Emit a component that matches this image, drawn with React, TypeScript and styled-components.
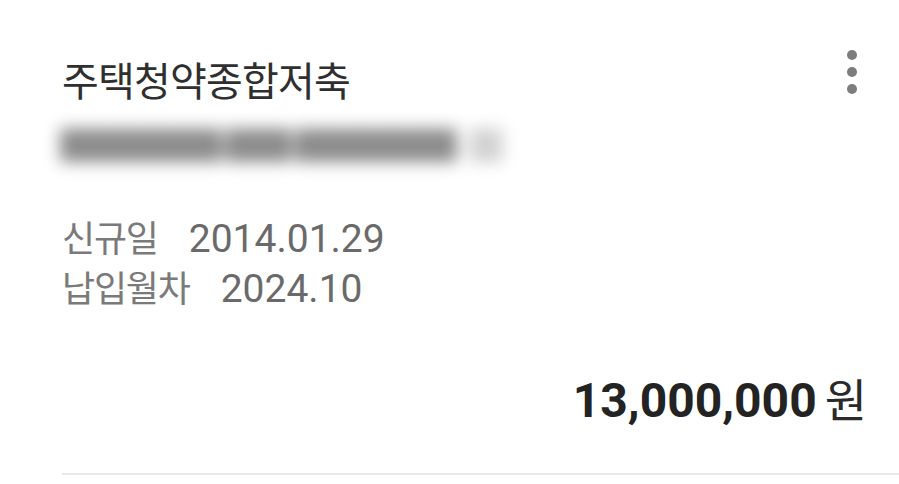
import React from 'react';
import styled, { createGlobalStyle } from 'styled-components';

const GlobalStyle = createGlobalStyle`
  html, body {
    margin: 0;
    padding: 0;
    background: #ffffff;
  }
  body {
    font-family: Roboto, "Noto Sans CJK KR", sans-serif;
  }
`;

const Card = styled.div`
  width: 899px;
  height: 484px;
  box-sizing: border-box;
  padding: 46px 0 0 62px;
  background: #ffffff;
  overflow: hidden;
`;

const Header = styled.div`
  display: flex;
  justify-content: space-between;
  align-items: flex-start;
  padding-right: 42px;
`;

const Title = styled.h1`
  margin: 0;
  font-family: "Noto Sans CJK KR", sans-serif;
  font-weight: 400;
  font-size: 40px;
  line-height: 66px;
  color: #2f2f2f;
  letter-spacing: -0.8px;
`;

const MoreButton = styled.button`
  display: flex;
  flex-direction: column;
  gap: 7px;
  padding: 4px 0 0;
  margin: 0;
  border: none;
  background: transparent;
  cursor: pointer;
`;

const Dot = styled.span`
  width: 10px;
  height: 10px;
  border-radius: 50%;
  background: #7d7d7d;
`;

// account number, blurred out in the source
const Masked = styled.div`
  margin: 0 0 0 -6px;
  height: 60px;
  display: flex;
  align-items: center;
  gap: 14px;
  font-family: "Noto Sans CJK KR", sans-serif;
  font-size: 42px;
  font-weight: 700;
  filter: blur(8px);
  user-select: none;
`;

const MaskedPart = styled.span<{ $faint?: boolean }>`
  color: ${(p) => (p.$faint ? '#d2d2d2' : '#8c8c8c')};
  letter-spacing: -10px;
`;

const InfoList = styled.dl`
  margin: 38px 0 0;
  display: flex;
  flex-direction: column;
  gap: 2px;
`;

const InfoRow = styled.div`
  display: flex;
  align-items: baseline;
  gap: 31px;
  height: 48px;
`;

const Label = styled.dt`
  margin: 0;
  font-family: "Noto Sans CJK KR", sans-serif;
  font-size: 36px;
  color: #7a7a7a;
  letter-spacing: -1.2px;
`;

const Value = styled.dd`
  margin: 0;
  font-family: Roboto, sans-serif;
  font-size: 39px;
  color: #6a6a6a;
`;

const AmountRow = styled.div`
  display: flex;
  justify-content: flex-end;
  align-items: baseline;
  gap: 8px;
  margin-top: 56px;
  padding-right: 32px;
`;

const Amount = styled.span`
  font-family: Roboto, sans-serif;
  font-weight: 700;
  font-size: 48px;
  color: #232323;
`;

const Unit = styled.span`
  font-family: "Noto Sans CJK KR", sans-serif;
  font-size: 46px;
  color: #2a2a2a;
`;

const Divider = styled.hr`
  margin: 43px 0 0;
  border: none;
  height: 2px;
  background: #e8e8e8;
`;

export default function App() {
  return (
    <>
      <GlobalStyle />
      <Card>
        <Header>
          <Title>주택청약종합저축</Title>
          <MoreButton aria-label="더보기">
            <Dot />
            <Dot />
            <Dot />
          </MoreButton>
        </Header>
        <Masked aria-hidden>
          <MaskedPart>■■■■■-■■-■■■■■</MaskedPart>
          <MaskedPart $faint>■</MaskedPart>
        </Masked>
        <InfoList>
          <InfoRow>
            <Label>신규일</Label>
            <Value>2014.01.29</Value>
          </InfoRow>
          <InfoRow>
            <Label>납입월차</Label>
            <Value>2024.10</Value>
          </InfoRow>
        </InfoList>
        <AmountRow>
          <Amount>13,000,000</Amount>
          <Unit>원</Unit>
        </AmountRow>
        <Divider />
      </Card>
    </>
  );
}
